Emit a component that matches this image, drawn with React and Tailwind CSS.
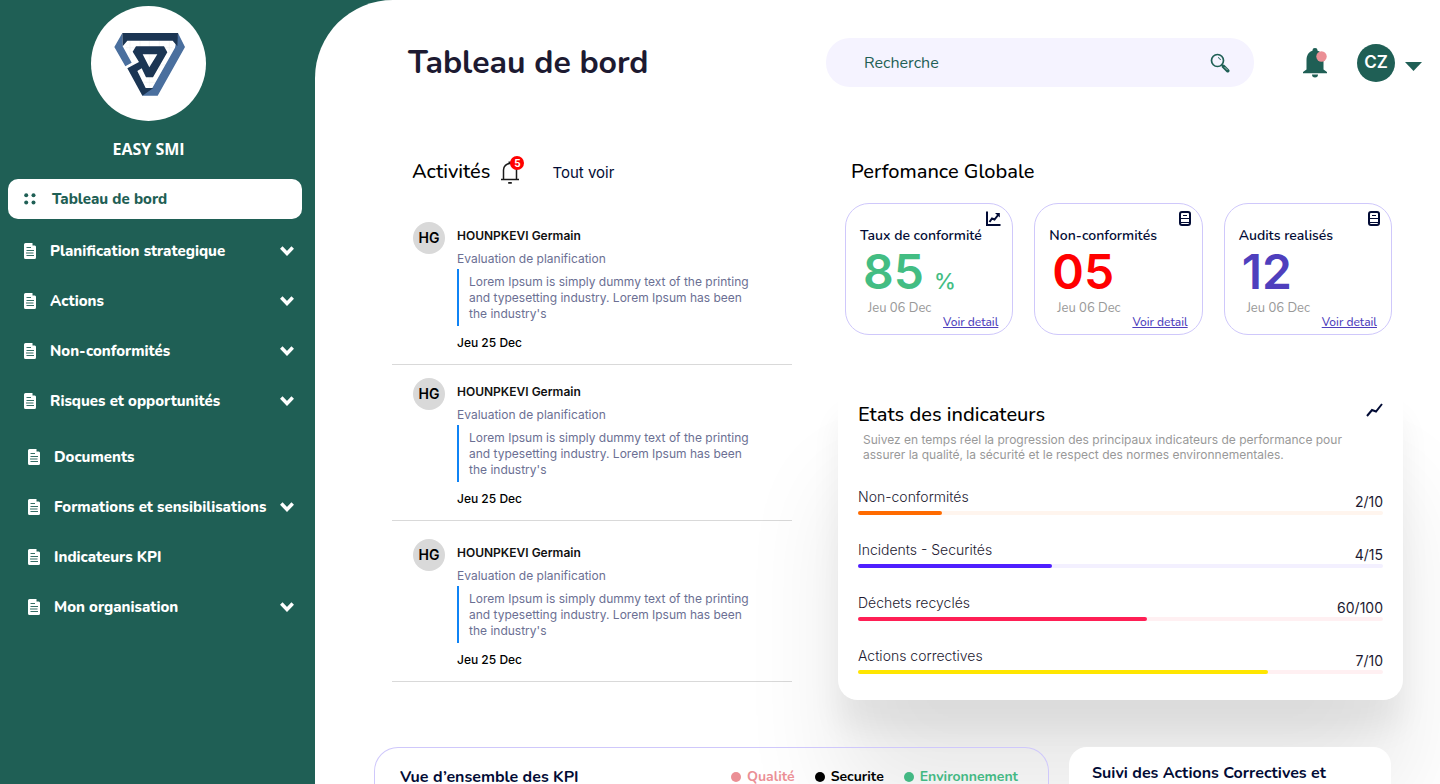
import { clsx } from "clsx";

const NUNITO = "font-[Nunito,Lato,sans-serif]";
const INTER = "font-[Inter,sans-serif]";

const MAIN_LINKS = [
  { label: "Planification strategique", expandable: true },
  { label: "Actions", expandable: true },
  { label: "Non-conformités", expandable: true },
  { label: "Risques et opportunités", expandable: true },
];

const EXTRA_LINKS = [
  { label: "Documents" },
  { label: "Formations et sensibilisations", expandable: true },
  { label: "Indicateurs KPI" },
  { label: "Mon organisation", expandable: true },
];

const ACTIVITIES = [1, 2, 3].map((id) => ({
  id,
  initials: "HG",
  name: "HOUNPKEVI Germain",
  action: "Evaluation de planification",
  text: "Lorem Ipsum is simply dummy text of the printing and typesetting industry. Lorem Ipsum has been the industry's",
  date: "Jeu 25 Dec",
}));

const STATS = [
  { label: "Taux de conformité", value: "85", unit: "%", color: "text-[#43bd83]", icon: ChartIcon },
  { label: "Non-conformités", value: "05", color: "text-[#ff0000]", icon: SheetIcon },
  { label: "Audits realisés", value: "12", color: "text-[#4f3fbd]", icon: SheetIcon },
];

const INDICATORS = [
  { label: "Non-conformités", count: "2/10", fill: 16, bar: "bg-[#ff6b00]", track: "bg-[#fff5ee]" },
  { label: "Incidents - Securités", count: "4/15", fill: 37, bar: "bg-[#4f1fff]", track: "bg-[#f3f0ff]" },
  { label: "Déchets recyclés", count: "60/100", fill: 55, bar: "bg-[#ff1f55]", track: "bg-[#fff0f2]" },
  { label: "Actions correctives", count: "7/10", fill: 78, bar: "bg-[#ffe600]", track: "bg-[#fff0f2]" },
];

const LEGEND = [
  { label: "Qualité", text: "text-[#eb8f95]", dot: "bg-[#eb8f95]" },
  { label: "Securite", text: "text-black", dot: "bg-black" },
  { label: "Environnement", text: "text-[#43b883]", dot: "bg-[#43b883]" },
];

function Logo() {
  return (
    <svg viewBox="3 3 345 345" className="size-[115px] rounded-full bg-white" aria-hidden="true">
      <g stroke="#f0f0f0" strokeWidth="2">
        <path d="M120 108v60M150 108v130M178 108v140M208 108v90M238 108v36M108 128h140M120 180h110M150 232h50" />
      </g>
      <path fill="#4a6f9e" d="M97 84 73 126 106 184 125 173 98 124Z" />
      <path fill="#4a6f9e" d="M264 84 285 126 203 272H157L167 249H187L255 128Z" />
      <path fill="#1b3553" d="M97 84H264L262 124 248 107H112L98 124Z" />
      <path
        fill="#1b3553"
        fillRule="evenodd"
        d="M138 124H222L232 142 189 217H168L155 190 142 198 167 249H190L157 272 112 190 147 171 128 140ZM158 148H202L178 187Z"
      />
    </svg>
  );
}

function FileIcon() {
  return (
    <svg viewBox="0 0 12 16" className="h-4 w-3 shrink-0" aria-hidden="true">
      <path fill="#fff" d="M1.5 0H8.500V2.500H11L12 3.500V14.500A1.500 1.500 0 0 1 10.500 16H1.500A1.500 1.500 0 0 1 0 14.500V1.500A1.500 1.500 0 0 1 1.500 0Z" />
      <path stroke="#1f5f55" strokeWidth="0.900" d="M2.500 4.500H7M2.500 7.500H10M2 10H9.500M2.500 12.500H10" />
    </svg>
  );
}

function ChevronIcon() {
  return (
    <svg viewBox="0 0 14 10" className="h-[10px] w-[14px] shrink-0" aria-hidden="true">
      <path d="M1.300 1.500 7 7.500 12.700 1.500" fill="none" stroke="#fff" strokeWidth="3.500" />
    </svg>
  );
}

function SearchIcon() {
  return (
    <svg viewBox="0 0 20 20" className="size-5" fill="none" stroke="#1f5f55" aria-hidden="true">
      <circle cx="7.500" cy="7.500" r="6" strokeWidth="1.700" />
      <path d="M8 4.500a3.500 3.500 0 0 1 2.500 2.500" />
      <path d="m11.500 11.500 2 2" strokeWidth="1.500" />
      <path d="m13.500 13.500 4.200 4.200" strokeWidth="3.600" strokeLinecap="round" />
      <path d="m14.500 14 3 3" stroke="#d9e4e6" strokeWidth="0.700" />
    </svg>
  );
}

function BellIcon() {
  return (
    <svg viewBox="0 0 26 30" className="h-[30px] w-[26px]" aria-hidden="true">
      <g fill="#1f5f55">
        <path d="M13 0a2.500 2.500 0 0 1 2.500 2.800C19.500 4 21.500 7.500 21.500 12v9.500L25 24v1.300H1V24l3.500-2.500V12c0-4.500 2-8 6-9.200A2.500 2.500 0 0 1 13 0Z" />
        <path d="M10 26.500h6a3 3 0 0 1-6 0Z" />
      </g>
      <circle cx="19.500" cy="8.500" r="5.200" fill="#eb8f95" />
    </svg>
  );
}

function BellOutlineIcon() {
  return (
    <svg viewBox="0 0 20 24" className="h-6 w-5" fill="none" stroke="#1a1a1a" strokeWidth="1.500" aria-hidden="true">
      <path d="M3.500 19.500V10a6.500 6.500 0 0 1 13 0v9.500" />
      <path d="M1 19.500h18" />
      <path d="M8.200 22.800h3.600M8.500 2.500h3" strokeWidth="1.800" />
    </svg>
  );
}

function ChartIcon() {
  return (
    <svg viewBox="0 0 15 15" className="size-[15px]" fill="none" stroke="#020b35" strokeWidth="2" aria-hidden="true">
      <path d="M1 0.500V14h13.500" />
      <path d="M3.500 11 6 7.500 8.500 8.500 12.500 3.500" />
      <path d="M9 2h4.800v4.500Z" fill="#020b35" stroke="none" />
    </svg>
  );
}

function SheetIcon() {
  return (
    <svg viewBox="0 0 12 15" className="h-[15px] w-3" fill="none" stroke="#020b35" aria-hidden="true">
      <rect x="1" y="1" width="10" height="13" rx="2" strokeWidth="2" />
      <path d="M4 4.500h4M2 7.500h8M2 11.500h8" />
    </svg>
  );
}

function TrendIcon() {
  return (
    <svg viewBox="0 0 17 14" className="h-[14px] w-[17px]" aria-hidden="true">
      <path d="M1 13 6 7 10 8.500 16 1" fill="none" stroke="#020b35" strokeWidth="2" />
    </svg>
  );
}

function NavGroup({ links, indent }) {
  return (
    <ul>
      {links.map(({ label, expandable }) => (
        <li key={label}>
          <button
            type="button"
            className={clsx("flex h-[50px] w-full items-center gap-[14px] pr-2 text-white", indent)}
          >
            <FileIcon />
            <span className="grow text-left text-[15px] font-extrabold whitespace-nowrap">{label}</span>
            {expandable && <ChevronIcon />}
          </button>
        </li>
      ))}
    </ul>
  );
}

function Sidebar() {
  return (
    <aside className={clsx("w-[315px] shrink-0 pt-[6px] pr-[13px] pl-2", NUNITO)}>
      <div className="flex flex-col items-center gap-4 pr-[13px]">
        <Logo />
        <p className="font-['Open_Sans',sans-serif] text-[16px] leading-6 font-bold text-white">EASY SMI</p>
      </div>
      <nav className="mt-[18px]">
        <a
          href="#tableau"
          className="mb-[7px] flex h-10 items-center gap-4 rounded-[10px] bg-white pl-4 text-[15px] font-extrabold text-[#1f5f55]"
        >
          <svg viewBox="0 0 12 12" className="size-3" fill="#1f5f55" aria-hidden="true">
            <circle cx="2.200" cy="2.200" r="2" />
            <circle cx="9.500" cy="2.200" r="2" />
            <circle cx="2.200" cy="9.500" r="2" />
            <circle cx="9.500" cy="9.500" r="2" />
          </svg>
          Tableau de bord
        </a>
        <div className="flex flex-col gap-[6px]">
          <NavGroup links={MAIN_LINKS} indent="pl-4" />
          <NavGroup links={EXTRA_LINKS} indent="pl-5" />
        </div>
      </nav>
    </aside>
  );
}

function Header() {
  return (
    <header className="flex items-center pt-[38px] pr-[18px] pl-[93px]">
      <h1 className="text-[32px] leading-10 font-bold whitespace-nowrap text-[#1d1a31]">Tableau de bord</h1>
      <label className="ml-auto flex h-[49px] w-[428px] items-center rounded-[24px] bg-[#f5f3ff] pr-6 pl-[38px]">
        <input
          type="search"
          placeholder="Recherche"
          aria-label="Recherche"
          className="min-w-0 grow bg-transparent text-base text-[#1f5f55] outline-none placeholder:text-[#1f5f55]"
        />
        <SearchIcon />
      </label>
      <button type="button" aria-label="Notifications" className="ml-12">
        <BellIcon />
      </button>
      <button type="button" aria-label="Compte" className="ml-[29px] flex items-center gap-[10px]">
        <span
          className={clsx(
            "flex size-[38px] items-center justify-center rounded-full bg-[#1f5f55] text-[17px] font-semibold text-white",
            INTER
          )}
        >
          CZ
        </span>
        <svg viewBox="0 0 17 9" className="mt-2 h-[9px] w-[17px]" fill="#1f5f55" aria-hidden="true">
          <path d="M0 0H17L8.500 9Z" />
        </svg>
      </button>
    </header>
  );
}

function Activities() {
  return (
    <section>
      <div className="flex h-[30px] items-center pl-5">
        <h2 className="text-[20px] leading-7 font-medium text-black">Activités</h2>
        <span className="relative ml-[10px]">
          <BellOutlineIcon />
          <span
            className={clsx(
              "absolute -top-1 -right-1 flex size-[14px] items-center justify-center rounded-full bg-[#ff0000] text-[10px] font-bold text-white",
              INTER
            )}
          >
            5
          </span>
        </span>
        <a href="#activites" className={clsx("ml-8 pt-[2px] text-[15px] text-[#020b35]", INTER)}>
          Tout voir
        </a>
      </div>
      <ul className={clsx("mt-[22px] text-[12px] leading-[18px]", INTER)}>
        {ACTIVITIES.map((item) => (
          <li key={item.id} className="flex gap-3 border-b border-[#d9d9d9] pt-[13px] pb-3 pl-[21px] last:pt-[18px]">
            <span className="flex size-8 shrink-0 items-center justify-center rounded-full bg-[#d9d9d9] text-[14px] font-semibold text-black">
              {item.initials}
            </span>
            <div className="pt-[5px]">
              <p className="font-semibold text-[#111]">{item.name}</p>
              <p className="mt-[5px] text-[#6b6f93]">{item.action}</p>
              <p className="mt-px max-w-[300px] border-l-2 border-[#0f83f5] pt-[5px] pb-1 pl-[10px] leading-4 text-[#6b6f93]">
                {item.text}
              </p>
              <p className="mt-2 font-medium text-black">{item.date}</p>
            </div>
          </li>
        ))}
      </ul>
    </section>
  );
}

function StatCard({ label, value, unit, color, icon: Icon }) {
  return (
    <article className="h-[132px] rounded-[24px] border border-[#cfc8fb] pt-[7px] pr-[11px] pl-[14px]">
      <div className="flex h-[15px] justify-end">
        <Icon />
      </div>
      <h3 className="text-[14px] leading-5 font-semibold whitespace-nowrap text-[#020b35]">{label}</h3>
      <p className={clsx("flex h-[52px] items-baseline gap-[10px] pl-[3px] font-semibold", color, INTER)}>
        <span className="text-[48px] leading-[52px]">{value}</span>
        {unit && <span className="text-[22px] leading-6 font-medium">{unit}</span>}
      </p>
      <p className="pl-2 text-[13px] leading-5 text-[#999]">Jeu 06 Dec</p>
      <p className="-mt-[5px] pr-[3px] text-right text-[12px] leading-[18px] font-medium">
        <a href="#detail" className="text-[#4f3fbd] underline">
          Voir detail
        </a>
      </p>
    </article>
  );
}

function Indicators() {
  return (
    <section className="mt-[50px] rounded-[20px] bg-white px-5 pt-[15px] pb-[26px] shadow-[0_100px_100px_rgba(0,0,0,0.09),0_30px_30px_rgba(0,0,0,0.06)]">
      <div className="flex justify-between">
        <h2 className="text-[20px] leading-[30px] font-medium text-black">Etats des indicateurs</h2>
        <span className="pt-[3px]">
          <TrendIcon />
        </span>
      </div>
      <p className={clsx("mt-[2px] max-w-[500px] pl-[5px] text-[12px] leading-[15px] text-[#999]", INTER)}>
        Suivez en temps réel la progression des principaux indicateurs de performance pour assurer la qualité, la
        sécurité et le respect des normes environnementales.
      </p>
      <ul className={clsx("mt-[26px] flex flex-col gap-[26px] text-[14px] font-light text-[#1d1a31]", INTER)}>
        {INDICATORS.map(({ label, count, fill, bar, track }) => (
          <li key={label}>
            <div className="flex h-[22px] justify-between">
              <span className="leading-[18px]">{label}</span>
              <span className="self-end leading-4 font-normal">{count}</span>
            </div>
            <div className={clsx("mt-px h-1 rounded-full", track)}>
              <div className={clsx("h-1 rounded-full", bar)} style={{ width: `${fill}%` }} />
            </div>
          </li>
        ))}
      </ul>
    </section>
  );
}

function Performance() {
  return (
    <div>
      <h2 className="pl-[13px] text-[20px] leading-[30px] font-medium text-black">Perfomance Globale</h2>
      <div className="mt-4 grid grid-cols-3 gap-[21px] pr-[11px] pl-[7px]">
        {STATS.map((stat) => (
          <StatCard key={stat.label} {...stat} />
        ))}
      </div>
      <Indicators />
    </div>
  );
}

export default function App() {
  return (
    <div className="flex min-h-screen bg-[#1f5f55]">
      <Sidebar />
      <main className={clsx("flex min-w-0 grow flex-col overflow-hidden rounded-tl-[78px] bg-white", NUNITO)}>
        <Header />
        <div className="mt-[70px] grid grid-cols-[400fr_565fr] gap-[46px] pr-[37px] pl-[77px]">
          <Activities />
          <Performance />
        </div>
        <div className="relative mt-[47px] grid grow grid-cols-[675fr_322fr] gap-5 pr-[49px] pl-[59px] text-[#020b35]">
          <section className="flex items-start justify-between rounded-t-[24px] border border-b-0 border-[#cfc8fb] pt-[21px] pr-[30px] pl-[25px]">
            <h2 className="text-[16px] leading-4 font-bold">Vue d’ensemble des KPI</h2>
            <ul className="flex gap-5 text-[14px] leading-4 font-bold">
              {LEGEND.map(({ label, text, dot }) => (
                <li key={label} className={clsx("flex items-center gap-[6px]", text)}>
                  <span className={clsx("size-[10px] rounded-full", dot)} />
                  {label}
                </li>
              ))}
            </ul>
          </section>
          <section className="rounded-t-[18px] bg-white pt-4 pl-[23px]">
            <h2 className="text-[16px] leading-5 font-bold">Suivi des Actions Correctives et</h2>
          </section>
        </div>
      </main>
    </div>
  );
}
